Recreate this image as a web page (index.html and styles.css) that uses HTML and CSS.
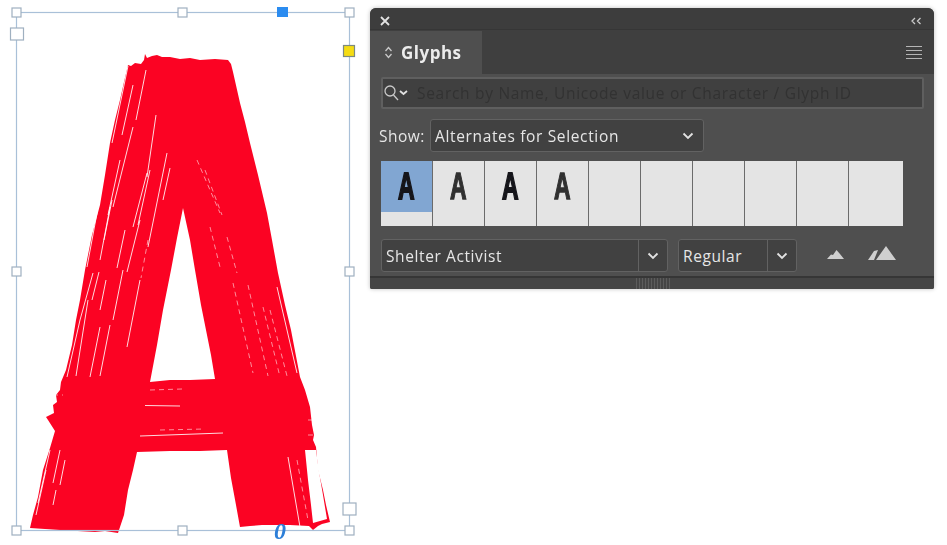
FILE: index.html
```html
<!DOCTYPE html>
<html lang="en">
<head>
    <meta charset="UTF-8">
    <title>Glyphs panel</title>
    <link rel="stylesheet" href="styles.css">
</head>
<body>
<div class="page">
    <svg class="artboard" width="370" height="545" viewBox="0 0 370 545">
        <path class="letter" d="M128 65 L131 66 L135 63 L141 64 L144 60 L145 54 L147 58 L152 56 L157 55 L162 57 L170 57 L180 59 L190 58 L200 60 L215 59 L228 60 L231 64 L233 72 L240 103 L245 122 L250 143 L258 175 L267 213 L272 240 L278 273 L285 305 L291 330 L300 377 L305 390 L310 407 L312 425 L314 435 L313 440 L316 447 L318 470 L323 490 L326 505 L330 522 L322 524 L318 526 L313 530 L309 526 L290 525 L262 525 L250 526 L240 527 L236 505 L231 478 L227 450 L200 451 L170 451 L137 452 L133 470 L128 490 L124 515 L118 533 L105 531 L95 532 L60 530 L30 528 L33 515 L38 497 L43 470 L50 448 L55 431 L48 420 L46 417 L54 413 L53 405 L57 402 L56 395 L60 390 L61 382 L66 370 L72 345 L76 320 L80 300 L85 270 L92 235 L100 205 L105 175 L110 143 L115 120 L120 100 L124 82 Z M183 208 L177 238 L171 270 L163 310 L157 345 L150 382 L170 380 L190 380 L215 379 L211 355 L208 340 L201 305 L195 270 L190 240 Z"/>
        <g class="streaks">
            <line x1="156" y1="115" x2="147" y2="177" stroke-width="2.4"/>
            <line x1="150" y1="170" x2="138" y2="225" stroke-width="1.6"/>
            <line x1="133" y1="127" x2="113" y2="207" stroke-width="2"/>
            <line x1="167" y1="153" x2="148" y2="247" stroke-width="1.4"/>
            <line x1="170" y1="168" x2="163" y2="200"/>
            <line x1="147" y1="173" x2="133" y2="227" stroke-width="1.6"/>
            <line x1="128" y1="66" x2="112" y2="143"/>
            <line x1="133" y1="85" x2="122" y2="135"/>
            <line x1="146" y1="70" x2="136" y2="120"/>
            <line x1="120" y1="160" x2="108" y2="215"/>
            <line x1="112" y1="200" x2="104" y2="240" stroke-width="1.6"/>
            <line x1="110" y1="207" x2="100" y2="260" stroke-width="1.4"/>
            <line x1="97" y1="213" x2="87" y2="267" stroke-width="1.2"/>
            <line x1="140" y1="220" x2="127" y2="272" stroke-width="1.2"/>
            <line x1="125" y1="230" x2="117" y2="268"/>
            <line class="dash" x1="148" y1="240" x2="141" y2="278"/>
            <line x1="123" y1="270" x2="113" y2="320" stroke-width="1.4"/>
            <line x1="93" y1="273" x2="80" y2="320" stroke-width="1.6"/>
            <line x1="99" y1="272" x2="92" y2="300" stroke-width="1.6"/>
            <line x1="106" y1="280" x2="100" y2="310" stroke-width="1.4"/>
            <line x1="80" y1="320" x2="67" y2="377" stroke-width="1.4"/>
            <line x1="88" y1="300" x2="76" y2="376" stroke-width="1.2"/>
            <line x1="100" y1="327" x2="90" y2="377"/>
            <line x1="110" y1="325" x2="100" y2="376"/>
            <line x1="140" y1="280" x2="127" y2="347"/>
            <line x1="50" y1="450" x2="38" y2="503" stroke-width="1.8"/>
            <line x1="60" y1="450" x2="53" y2="483" stroke-width="1.2"/>
            <line x1="46" y1="470" x2="36" y2="515" stroke-width="1"/>
            <line x1="56" y1="490" x2="53" y2="505" stroke-width="2"/>
            <line x1="65" y1="460" x2="60" y2="485"/>
            <line class="dash" x1="197" y1="160" x2="220" y2="213"/>
            <line class="dash" x1="205" y1="170" x2="222" y2="215"/>
            <line class="dash" x1="210" y1="227" x2="220" y2="267"/>
            <line class="dash" x1="227" y1="237" x2="237" y2="273"/>
            <line x1="277" y1="287" x2="297" y2="373" stroke-width="2"/>
            <line class="dash" x1="263" y1="307" x2="280" y2="377" stroke-width="1.4"/>
            <line class="dash" x1="270" y1="310" x2="287" y2="376"/>
            <line class="dash" x1="233" y1="283" x2="253" y2="373"/>
            <line class="dash" x1="248" y1="285" x2="268" y2="376"/>
            <line x1="140" y1="436" x2="223" y2="433" stroke-width="1.8"/>
            <line x1="145" y1="405.500" x2="180" y2="406" stroke-width="1.6"/>
            <line class="dash" x1="150" y1="390" x2="182" y2="389"/>
            <line class="dash" x1="160" y1="430" x2="205" y2="429"/>
            <line x1="288" y1="457" x2="300" y2="527" stroke-width="1.2"/>
            <line class="dash" x1="297" y1="460" x2="308" y2="520" stroke-width="1.4"/>
            <line class="dash" x1="53" y1="395" x2="63" y2="395"/>
            <line class="dash" x1="308" y1="420" x2="316" y2="420"/>
            <line class="dash" x1="308" y1="435" x2="316" y2="435"/>
        </g>
        <path class="letter-gap" d="M305 450 L316 450 L319 472 L323 495 L327 519 L320 521 L313 523 L311 505 L308 480 Z"/>
        <g class="frame">
            <rect class="bounds" x="16.500" y="12.500" width="333" height="518"/>
            <rect class="handle" x="12" y="8" width="9" height="9"/>
            <rect class="handle" x="178" y="8" width="9" height="9"/>
            <rect class="handle" x="345" y="8" width="9" height="9"/>
            <rect class="handle" x="12" y="267" width="9" height="9"/>
            <rect class="handle" x="345" y="267" width="9" height="9"/>
            <rect class="handle" x="12" y="526" width="9" height="9"/>
            <rect class="handle" x="178" y="526" width="9" height="9"/>
            <rect class="handle" x="345" y="526" width="9" height="9"/>
            <rect class="handle" x="10.500" y="28" width="13" height="12"/>
            <rect class="handle" x="343" y="503" width="13" height="12"/>
            <rect class="handle-blue" x="277" y="7" width="11" height="10"/>
            <rect class="handle-yellow" x="343.500" y="45.500" width="11" height="11"/>
            <text class="overset" x="274" y="539">0</text>
        </g>
    </svg>

    <div class="panel">
        <div class="titlebar">
            <svg width="10" height="10" viewBox="0 0 10 10"><path class="icon-stroke" d="M1 1 L9 9 M9 1 L1 9"/></svg>
            <svg width="12" height="8" viewBox="0 0 12 8"><path class="icon-thin" d="M5 1 L2 4 L5 7 M10.500 1 L7.500 4 L10.500 7"/></svg>
        </div>
        <div class="tabrow">
            <div class="tab">
                <svg width="9" height="13" viewBox="0 0 9 13"><path class="icon-thin" d="M1.500 5 L4.500 1.500 L7.500 5 M1.500 8 L4.500 11.500 L7.500 8"/></svg>
                <span>Glyphs</span>
            </div>
            <div class="menu-icon"><i></i><i></i><i></i><i></i></div>
        </div>
        <div class="content">
            <div class="search">
                <svg width="30" height="20" viewBox="0 0 30 20"><circle class="icon-thin" cx="7" cy="8" r="5"/><path class="icon-thin" d="M10.500 12 L15 17"/><path class="icon-stroke" d="M17 8 L20.500 11 L24 8"/></svg>
                <span>Search by Name, Unicode value or Character / Glyph ID</span>
            </div>
            <div class="show-row">
                <span class="show-label">Show:</span>
                <div class="select show-select">
                    <span>Alternates for Selection</span>
                    <svg class="chevron" width="12" height="8" viewBox="0 0 12 8"><path class="icon-stroke" d="M1.500 1.500 L6 6 L10.500 1.500"/></svg>
                </div>
            </div>
            <div class="glyphs">
                <div class="cell selected"><div class="blue"><b class="glyph">A</b></div></div>
                <div class="cell"><b class="glyph worn">A</b></div>
                <div class="cell"><b class="glyph">A</b></div>
                <div class="cell"><b class="glyph worn">A</b></div>
                <div class="cell"></div>
                <div class="cell"></div>
                <div class="cell"></div>
                <div class="cell"></div>
                <div class="cell"></div>
                <div class="cell"></div>
            </div>
            <div class="font-row">
                <div class="combo family">
                    <span class="combo-text">Shelter Activist</span>
                    <div class="combo-btn"><svg width="12" height="8" viewBox="0 0 12 8"><path class="icon-stroke" d="M1.500 1.500 L6 6 L10.500 1.500"/></svg></div>
                </div>
                <div class="combo style">
                    <span class="combo-text">Regular</span>
                    <div class="combo-btn"><svg width="12" height="8" viewBox="0 0 12 8"><path class="icon-stroke" d="M1.500 1.500 L6 6 L10.500 1.500"/></svg></div>
                </div>
                <svg class="mount-small" width="17" height="9" viewBox="0 0 17 9"><path class="icon-fill" d="M0 9 L4 4.500 L6 5 L9.500 0 L13 4 L17 9 Z"/></svg>
                <svg class="mount-big" width="28" height="14" viewBox="0 0 28 14"><path class="icon-fill" d="M0 14 L6 5 L10 4 L6 14 Z M8 14 L18 0 L28 14 Z"/></svg>
            </div>
        </div>
        <div class="footer"><div class="grip"></div></div>
    </div>
</div>
</body>
</html>
```

FILE: styles.css
```css
body {
    margin: 0;
    background: #fff;
    font-family: "Open Sans", sans-serif;
    overflow: hidden;
}
.page {
    display: flex;
    align-items: flex-start;
    width: 947px;
    height: 545px;
}
.artboard {
    flex: none;
    filter: blur(.3px);
}

/* the brush letter */
.letter {
    fill: #fb0323;
    fill-rule: evenodd;
}
.letter-gap {
    fill: #fff;
}
.streaks line {
    stroke: #fff;
    stroke-width: 1;
    opacity: .85;
}
.streaks .dash {
    stroke-dasharray: 5 4;
    opacity: .55;
}
.bounds {
    fill: none;
    stroke: #a9c0d8;
    stroke-width: 1.2;
}
.handle {
    fill: #fff;
    stroke: #9fb0c0;
    stroke-width: 1.2;
}
.handle-blue {
    fill: #2b8cf0;
}
.handle-yellow {
    fill: #f5dc12;
    stroke: #7d8a80;
    stroke-width: 1.2;
}
.overset {
    font-family: "Liberation Serif", serif;
    font-style: italic;
    font-weight: 700;
    font-size: 24px;
    fill: #2d7fd8;
}

/* panel */
.panel {
    flex: none;
    display: flex;
    flex-direction: column;
    width: 564px;
    height: 281px;
    margin-top: 8px;
    background: #4f4f4f;
    border-radius: 6px 6px 2px 2px;
    box-shadow: 0 0 4px rgba(0,0,0,0.25);
    color: #e6e6e6;
    overflow: hidden;
    filter: blur(.4px);
}
.titlebar {
    flex: none;
    display: flex;
    align-items: center;
    justify-content: space-between;
    height: 22px;
    padding: 4px 12px 0 10px;
    box-sizing: border-box;
    background: #3d3d3d;
    border-bottom: 1px solid #363636;
}
.tabrow {
    flex: none;
    display: flex;
    justify-content: space-between;
    align-items: center;
    height: 44px;
    padding-top: 1px;
    box-sizing: border-box;
    background: #3f3f3f;
}
.tab {
    display: flex;
    align-items: center;
    gap: 8px;
    width: 112px;
    height: 43px;
    padding-left: 14px;
    box-sizing: border-box;
    background: #4f4f4f;
    font-size: 17px;
    font-weight: 700;
    letter-spacing: .5px;
    color: #ececec;
}
.menu-icon {
    display: flex;
    flex-direction: column;
    gap: 3px;
    width: 16px;
    margin-right: 12px;
}
.menu-icon i {
    display: block;
    height: 1px;
    background: #b5b5b5;
}
.content {
    flex: 1;
    display: flex;
    flex-direction: column;
    padding: 3px 10px 0 11px;
}
.search {
    display: flex;
    align-items: center;
    gap: 4px;
    width: 543px;
    height: 32px;
    padding-left: 0;
    box-sizing: border-box;
    background: #404040;
    border: 2px solid #5f5f5f;
    border-radius: 2px;
    font-size: 15.500px;
    letter-spacing: .7px;
    color: #323232;
    white-space: nowrap;
}
.show-row {
    display: flex;
    align-items: center;
    gap: 3px;
    margin-top: 10px;
    font-size: 15.500px;
    letter-spacing: .5px;
}
.show-label {
    width: 48px;
    margin-left: -2px;
}
.select {
    display: flex;
    align-items: center;
    justify-content: space-between;
    box-sizing: border-box;
    background: #414141;
    border: 1.500px solid #626262;
    border-radius: 3px;
}
.show-select {
    width: 274px;
    height: 33px;
    padding: 0 9px 0 4px;
    letter-spacing: .65px;
}
.glyphs {
    display: grid;
    grid-template-columns: repeat(9, 51px) 1fr;
    gap: 1px;
    width: 522px;
    height: 65px;
    margin-top: 9px;
    background: #6b6b6b;
}
.cell {
    display: flex;
    justify-content: center;
    background: #e4e4e4;
}
.blue {
    display: flex;
    justify-content: center;
    width: 100%;
    height: 51px;
    background: #81a6d2;
}
.glyph {
    display: block;
    height: 40px;
    margin-top: 6px;
    font-family: "Liberation Sans", sans-serif;
    font-size: 37px;
    line-height: 40px;
    color: #15151a;
    -webkit-text-stroke: 1.800px #15151a;
    transform: scaleX(.62);
}
.glyph.worn {
    color: #303030;
    -webkit-text-stroke: 1.400px #303030;
}
.font-row {
    display: flex;
    align-items: center;
    margin-top: 13px;
}
.combo {
    display: flex;
    box-sizing: border-box;
    height: 33px;
    background: #414141;
    border: 1.500px solid #626262;
    border-radius: 3px;
    font-size: 15.500px;
    letter-spacing: .6px;
}
.family {
    width: 287px;
}
.style {
    width: 119px;
    margin-left: 10px;
}
.combo-text {
    flex: 1;
    align-self: center;
    padding-left: 4px;
}
.combo-btn {
    display: flex;
    align-items: center;
    justify-content: center;
    width: 28px;
    border-left: 1.500px solid #626262;
}
.mount-small {
    margin: -2px 0 0 30px;
    flex: none;
}
.mount-big {
    margin: -5px 0 0 24px;
    flex: none;
}
.footer {
    flex: none;
    display: flex;
    justify-content: center;
    height: 13px;
    background: #454545;
    border-top: 2px solid #363636;
    box-sizing: border-box;
}
.grip {
    width: 35px;
    margin-right: -3px;
    background: repeating-linear-gradient(90deg, #5c5c5c 0 1px, #454545 1px 3px);
}
.icon-stroke {
    fill: none;
    stroke: #e2e2e2;
    stroke-width: 1.800;
}
.icon-thin {
    fill: none;
    stroke: #c9c9c9;
    stroke-width: 1.300;
}
.icon-fill {
    fill: #cfcfcf;
}
```
